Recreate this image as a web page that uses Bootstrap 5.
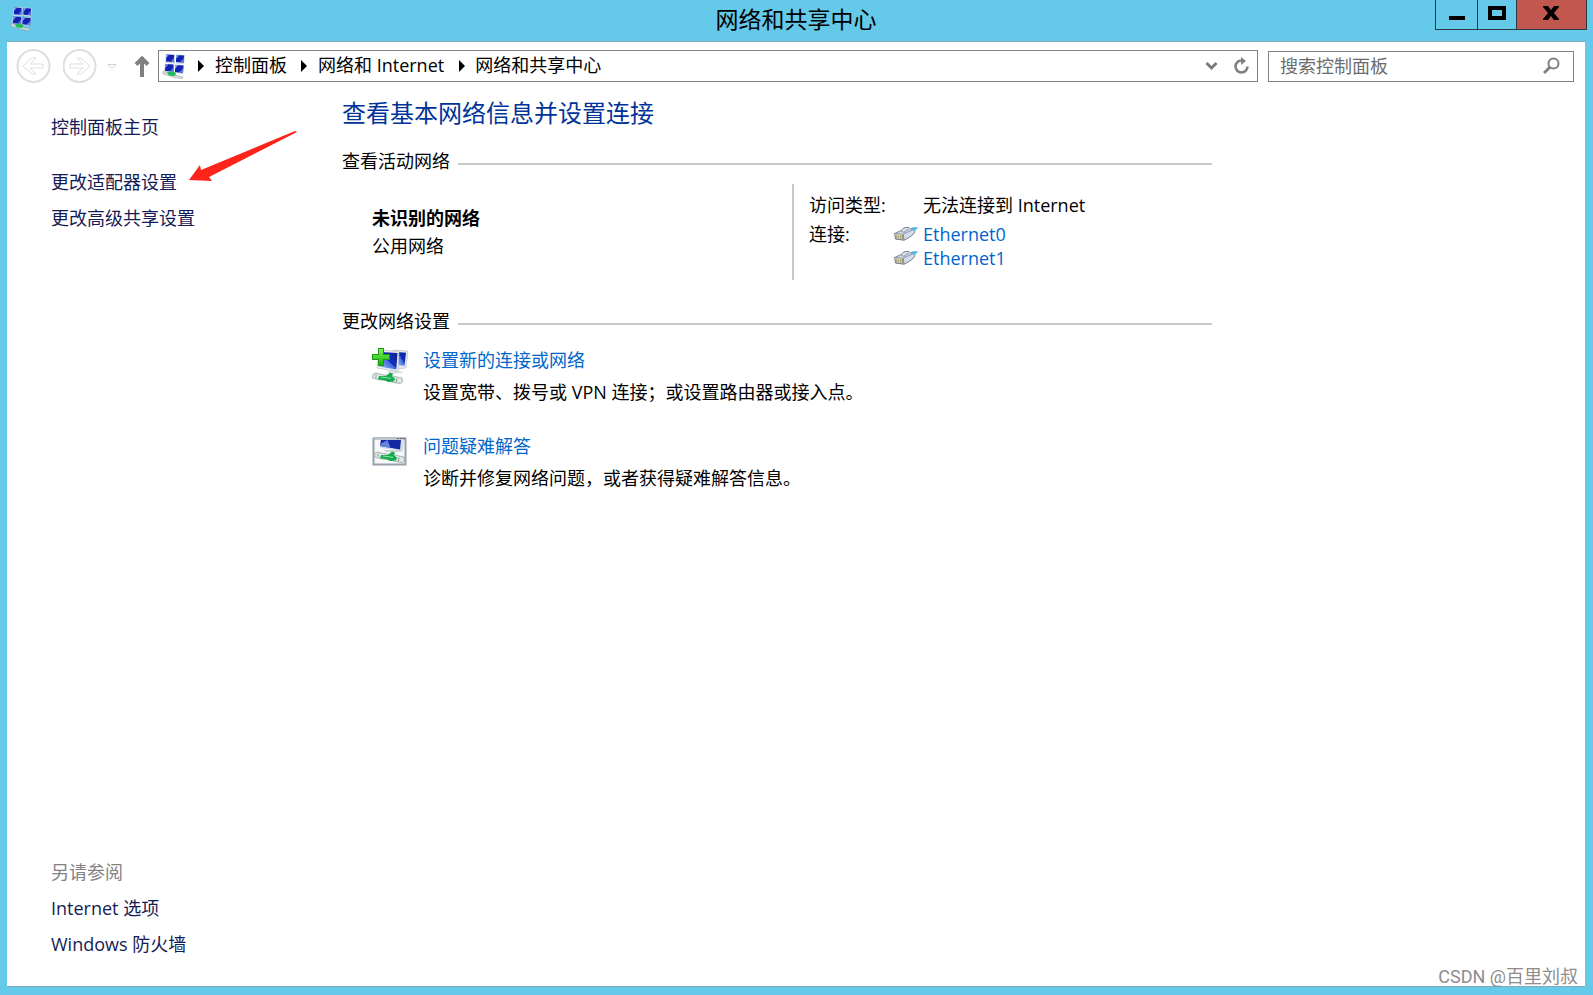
<!DOCTYPE html>
<html lang="zh-CN">
<head>
<meta charset="utf-8">
<meta name="viewport" content="width=device-width, initial-scale=1">
<title>网络和共享中心</title>
<link href="https://cdn.jsdelivr.net/npm/bootstrap@5.3.0/dist/css/bootstrap.min.css" rel="stylesheet">
<style>
  body { font-family: "Open Sans", "Noto Sans CJK SC", sans-serif; font-size: 18px; line-height: 24px; color: #000; background: #65c9e9; }
  a { text-decoration: none; color: #0066cc; }
  a:hover { text-decoration: underline; }
  svg { display: block; flex: none; }
  .window-frame { min-height: 100vh; padding: 0 8px 8px 7px; }
  .title-bar { height: 41px; }
  .title-icon { left: 3px; top: 6px; }
  .title-bar h1 { font-size: 23px; line-height: 38px; }
  .caption-buttons { right: -2px; top: 0; height: 30px; border: 1px solid #2b3a42; border-top: 0; }
  .caption-buttons button { border: 0; background: transparent; padding: 0; height: 29px; }
  .caption-buttons button + button { border-left: 1px solid #2b3a42; }
  .caption-buttons .btn-min { width: 41px; }
  .caption-buttons .btn-max { width: 39px; }
  .caption-buttons .btn-shut { width: 70px; background: #c1574e; }
  .client { border: solid #7fa9bc; border-width: 1px 0; }
  .toolbar { padding: 7px 11px 0 9px; }
  .toolbar button { border: 0; padding: 0; background: transparent; }
  .address { height: 32px; border: 1px solid #828282; padding: 0 8px 0 3px; margin: 0 10px 0 6px; }
  .address a { color: #000; line-height: 28px; padding-bottom: 2px; }
  .search-box { width: 306px; height: 31px; border: 1px solid #828282; padding: 0 13px 0 11px; }
  .search-box input { border: 0; outline: 0; padding: 0; height: 29px; line-height: 29px; color: #000; background: transparent; min-width: 0; }
  .search-box input::placeholder { color: #6d6d6d; opacity: 1; }
  .side { width: 335px; padding: 26px 0 24px 44px; line-height: 36px; }
  .side a { color: #151c55; display: block; }
  .home-link { margin-bottom: 19px; }
  .see-also { color: #838383; }
  .red-arrow { left: 180px; top: 44px; }
  .content { padding-top: 12px; max-width: 870px; }
  .content h2 { font-size: 24px; line-height: 36px; color: #003399; margin: 0 0 18px; }
  .section-title { gap: 8px; }
  .section-title h3 { font-size: 18px; line-height: 24px; margin: 0; }
  .rule { height: 2px; background: #c8c8c8; margin-top: 6px; }
  .network { margin: 11px 0 29px; padding-left: 30px; line-height: 28px; }
  .network-name { width: 420px; padding-top: 20px; }
  .details { border-left: 2px solid #c8c8c8; height: 96px; padding: 7px 0 0 15px; }
  .details dl { grid-template-columns: 85px 29px auto; row-gap: 1px; }
  .details dt, .details dd { font-weight: 400; margin: 0; }
  .details .wide { grid-column: span 2; }
  .links { grid-column: 2 / span 2; line-height: 24px; padding-top: 2px; }
  .links a { gap: 5px; }
  .task { gap: 15px; padding-left: 30px; line-height: 32px; }
  .task svg { margin-top: 1px; }
  .task p { margin: 0; }
  .task-list { padding-top: 11px; gap: 22px; }
  .watermark { right: 15px; bottom: 6px; line-height: 24px; color: #8d8d8d; font-family: Roboto, "Noto Sans CJK SC", sans-serif; }
</style>
</head>
<body>
<svg width="0" height="0" class="position-absolute" aria-hidden="true">
  <defs>
    <linearGradient id="screenBig" x1="0" y1="1" x2="1" y2="0"><stop offset="0" stop-color="#a9c6ff"/><stop offset=".5" stop-color="#3f62dc"/><stop offset=".51" stop-color="#1330b8"/><stop offset="1" stop-color="#0a1f96"/></linearGradient>
    <linearGradient id="plus" x1="0" y1="0" x2="0" y2="1"><stop offset="0" stop-color="#7ff05a"/><stop offset="1" stop-color="#18b50c"/></linearGradient>
    <symbol id="centerIcon" viewBox="0 0 24 26">
      <path d="M4 1l9 .5v9L3 10zM14 1.500l9 .5-1 9-8-.5zM3 11l9 .5-.5 8L2 18zM13 11.500l9 .5-1 9-8.500-1z" fill="#c9d3df"/>
      <path d="M4.500 1.500l7.500.5v7l-8-.5zM14 2l8 .5-.5 7-7.500-.5zM3.500 11l8 .5v7L3 18zM13 12l8.500.5-.5 7.500-8-1z" fill="#1420b4"/>
      <path d="M4.300 5l2.500-3-2.600-.2zM14 6l3-3.700-3-.3zM3.300 15l3-3.700-2.800-.1zM13 16l3-3.700-3-.3z" fill="#7fa6ee"/>
      <path d="M9 8.500l3-4v5zM18.500 9l3-4v5zM8.500 18l3-4v5zM17 19.500l4-4v5z" fill="#5b80e0"/>
      <path d="M1 18.500l6 1 4 2 10 2.500-1 1.800-8-1.500-5-1.500-6-2z" fill="#d9dedf" stroke="#8a9699" stroke-width=".5"/>
      <path d="M5 19.500l5-1.500 4 2-1 3-6-.5z" fill="#22bb57"/>
    </symbol>
    <symbol id="jack" viewBox="0 0 24 16">
      <path d="M15 5l3-3.500h6l-5 5z" fill="#58b7da"/>
      <path d="M.8 7.500L7 4.500l3-2.800 4.500-.3 2 1.500 3.500.3 1 2.500-2.500 3.500-8 5L1.500 13z" fill="#d3dbe9" stroke="#5e6878" stroke-width=".8"/>
      <path d="M17 3l1.500-1.500H24L20.500 5z" fill="#58b7da"/>
      <path d="M7 5l3 1.500 5-3.600M9.500 8L19 3.700M9 8l1 5.500" fill="none" stroke="#7c879b" stroke-width=".8"/>
      <path d="M.8 7.500l8.500.7.500 5.800-8-1.200z" fill="#efefe4" stroke="#697080" stroke-width=".7"/>
      <path d="M2.800 8.500v4M4.800 8.700v4M6.800 9v4M8.300 9v4.300" stroke="#85844a" stroke-width=".9"/>
    </symbol>
    <symbol id="cable" viewBox="0 0 31 12">
      <path d="M1 2.500l2-1.500 9 2 6 .5 12 2.500.5 4-2 1.500-7-1-7-2-6-.5-8-2z" fill="#dfe9e6" stroke="#8e9b98" stroke-width=".7"/>
      <path d="M7 4l7 0 4-3.500 3 1-1 3 3 2-1 3-6 .5-4-2-6-.5z" fill="#16ac4e"/>
      <path d="M9 5l10 1.300" stroke="#8ce6a6" stroke-width="1"/>
      <path d="M4 2.500v3M25 6.500l-1 4" stroke="#69806f" stroke-width=".8"/>
    </symbol>
  </defs>
</svg>

<div class="window-frame d-flex flex-column">
  <header class="title-bar position-relative">
    <svg class="title-icon position-absolute" width="23" height="25" aria-hidden="true"><use href="#centerIcon"/></svg>
    <h1 class="text-center m-0 fw-normal">网络和共享中心</h1>
    <div class="caption-buttons position-absolute d-flex">
      <button type="button" class="btn-min" aria-label="最小化"><svg width="41" height="29"><path d="M13 16h16v4H13z"/></svg></button>
      <button type="button" class="btn-max" aria-label="最大化"><svg width="38" height="29"><path d="M12 8h14v10H12z" fill="none" stroke="#000" stroke-width="4"/></svg></button>
      <button type="button" class="btn-shut" aria-label="关闭"><svg width="69" height="29"><path d="M26 6h5l3 4 3-4h5v1l-5 6 5 6v1h-5l-3-4-3 4h-5v-1l5-6-5-6z"/></svg></button>
    </div>
  </header>

  <div class="client bg-white flex-grow-1 d-flex flex-column">
    <div class="toolbar d-flex align-items-center">
      <button type="button" disabled aria-label="后退"><svg width="35" height="34" fill="none" stroke="#dedede"><circle cx="17.500" cy="17" r="16" stroke-width="2"/><path d="M7 17l9-8h4l-6 6h13v4H14l6 6h-4z"/></svg></button>
      <button type="button" class="ms-2 ps-1" disabled aria-label="前进"><svg width="35" height="34" fill="none" stroke="#dedede"><circle cx="16.500" cy="17" r="16" stroke-width="2"/><path d="M27 17l-9-8h-4l6 6H7v4h13l-6 6h4z"/></svg></button>
      <button type="button" class="ms-2" disabled aria-label="最近的位置"><svg width="20" height="34" fill="none" stroke="#d0d0d0"><path d="M2 15.500h8l-4 4z"/></svg></button>
      <button type="button" class="ms-1" aria-label="上移"><svg width="22" height="34"><path d="M12 8v20M6 15.500l6-6 6 6" fill="none" stroke="#808080" stroke-width="4"/></svg></button>
      <nav class="address flex-grow-1 d-flex align-items-center" aria-label="地址">
        <svg width="24" height="26" aria-hidden="true"><use href="#centerIcon"/></svg>
        <svg class="ms-2" width="21" height="14" aria-hidden="true"><path d="M4 1l6 6-6 6z"/></svg>
        <a href="#">控制面板</a>
        <svg class="ms-2" width="23" height="14" aria-hidden="true"><path d="M6 1l6 6-6 6z"/></svg>
        <a href="#">网络和 Internet</a>
        <svg class="ms-2" width="23" height="14" aria-hidden="true"><path d="M7 1l6 6-6 6z"/></svg>
        <a href="#" class="me-auto">网络和共享中心</a>
        <button type="button" aria-label="以前的位置"><svg width="13" height="18"><path d="M1.500 6l5 5 5-5" fill="none" stroke="#7a7a7a" stroke-width="3"/></svg></button>
        <button type="button" class="ms-3" aria-label="刷新"><svg width="15" height="20"><path d="M13.500 10.500a6 6 0 1 1-6-6" fill="none" stroke="#808080" stroke-width="2.500"/><path d="M7 1l5 4-5 4z" fill="#808080"/></svg></button>
      </nav>
      <form class="search-box d-flex align-items-center" role="search">
        <label for="search" class="d-flex flex-row-reverse align-items-center m-0" aria-label="搜索控制面板">
          <svg width="17" height="18" fill="none" stroke="#808080" aria-hidden="true"><circle cx="10.500" cy="6.500" r="5" stroke-width="2"/><path d="M7 10l-6 6" stroke-width="3"/></svg>
        </label>
        <input id="search" class="flex-grow-1 order-first" type="text" placeholder="搜索控制面板">
      </form>
    </div>

    <div class="d-flex flex-grow-1">
      <aside class="side flex-shrink-0 d-flex flex-column justify-content-between position-relative">
        <nav>
          <a href="#" class="home-link">控制面板主页</a>
          <a href="#">更改适配器设置</a>
          <a href="#">更改高级共享设置</a>
        </nav>
        <svg class="red-arrow position-absolute" width="114" height="58" aria-hidden="true"><path d="M2 53L13 38l1 5L108 4l2 1-86 44-2 1 3 4z" fill="#fe2419"/></svg>
        <nav>
          <div class="see-also">另请参阅</div>
          <a href="#">Internet 选项</a>
          <a href="#">Windows 防火墙</a>
        </nav>
      </aside>

      <main class="content flex-grow-1">
        <h2 class="fw-normal">查看基本网络信息并设置连接</h2>
        <section>
          <div class="section-title d-flex align-items-center"><h3 class="fw-normal">查看活动网络</h3><div class="rule flex-grow-1"></div></div>
          <div class="network d-flex">
            <div class="network-name"><div class="fw-bold">未识别的网络</div><div>公用网络</div></div>
            <div class="details">
              <dl class="d-grid m-0">
                <dt class="wide">访问类型:</dt><dd>无法连接到 Internet</dd>
                <dt>连接:</dt>
                <dd class="links">
                  <a href="#" class="d-flex align-items-center"><svg width="24" height="16" aria-hidden="true"><use href="#jack"/></svg>Ethernet0</a>
                  <a href="#" class="d-flex align-items-center"><svg width="24" height="16" aria-hidden="true"><use href="#jack"/></svg>Ethernet1</a>
                </dd>
              </dl>
            </div>
          </div>
        </section>
        <section>
          <div class="section-title d-flex align-items-center"><h3 class="fw-normal">更改网络设置</h3><div class="rule flex-grow-1"></div></div>
          <div class="task-list d-flex flex-column">
            <div class="task d-flex">
              <svg width="36" height="40" aria-hidden="true">
                <path d="M21 5l15 1-2 17-9 1z" fill="#e4e8ec" stroke="#b4bbc2" stroke-width=".6"/><path d="M25 7l9 .7-1.500 13L25 20z" fill="url(#screenBig)"/>
                <path d="M18 25l10 1 4 2-13 1-4-2z" fill="#e0e3e6"/>
                <path d="M7 5l20 1.500-1 20L5 23z" fill="#edf0f3" stroke="#b0b7be" stroke-width=".6"/><path d="M8.500 7l17 1-1.200 16.500L7 21.500z" fill="url(#screenBig)"/>
                <path d="M6 3h6v6h6v6h-6v6H6v-6H0V9h6z" fill="#1a9a10"/><path d="M7 4h4v6h6v4h-6v6H7v-6H1v-4h6z" fill="url(#plus)"/>
                <use href="#cable" x="0" y="27" width="31" height="12"/>
              </svg>
              <div><a href="#">设置新的连接或网络</a><p>设置宽带、拨号或 VPN 连接；或设置路由器或接入点。</p></div>
            </div>
            <div class="task d-flex">
              <svg width="36" height="40" aria-hidden="true">
                <path d="M1.500 7.500h32v26h-32z" fill="#f6f8fa" stroke="#98a0aa" stroke-width="2"/>
                <path d="M2 7h31" stroke="#b9c0c8" stroke-width="2"/><path d="M25 7.500h2m1 0h2m1 0h2" stroke="#52616f"/>
                <path d="M8 9h24l-1 11-23-3z" fill="#d9dee4"/><path d="M9 9h20l-1 9.500L8 15z" fill="#1128a2"/><path d="M8.500 13l7-4 3 8-10-2z" fill="#6284dc"/>
                <path d="M12 19h18v2H14z" fill="#cfd4d9"/>
                <use href="#cable" x="2" y="20" width="31" height="12"/>
              </svg>
              <div><a href="#">问题疑难解答</a><p>诊断并修复网络问题，或者获得疑难解答信息。</p></div>
            </div>
          </div>
        </section>
      </main>
    </div>
  </div>
</div>
<div class="watermark position-absolute">CSDN @百里刘叔</div>
<script src="https://cdn.jsdelivr.net/npm/bootstrap@5.3.0/dist/js/bootstrap.bundle.min.js"></script>
</body>
</html>
